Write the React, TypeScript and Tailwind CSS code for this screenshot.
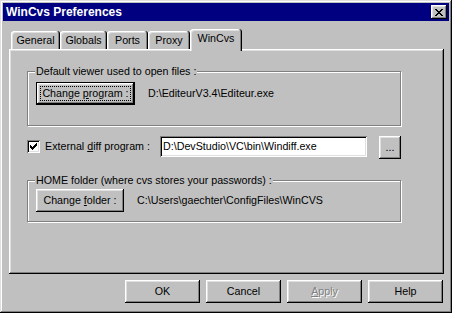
import type { ReactNode } from 'react';

// Win95 bevels, written out in full so Tailwind picks them up.
const raised = 'shadow-[inset_-1px_-1px_#000,inset_1px_1px_#fff,inset_-2px_-2px_#808080,inset_2px_2px_#dfdfdf]';
const sunken = 'shadow-[inset_1px_1px_#808080,inset_-1px_-1px_#fff,inset_2px_2px_#000,inset_-2px_-2px_#dfdfdf]';

function Button({ children, className = '', isDefault = false, disabled = false }: { children: ReactNode; className?: string; isDefault?: boolean; disabled?: boolean }) {
    return (
        <button
            type="button"
            className={`relative flex h-[23px] items-center justify-center bg-[#c0c0c0] ${isDefault ? 'border border-black' : ''} ${raised} ${
                disabled ? 'text-[#808080] [text-shadow:1px_1px_0_#fff]' : 'text-black'
            } ${className}`}
        >
            {/* the focus rectangle on the default button */}
            {isDefault && <span className="pointer-events-none absolute inset-[3px] border border-dotted border-black" />}
            {children}
        </button>
    );
}

function GroupBox({ label, className = '', children }: { label: string; className?: string; children: ReactNode }) {
    return (
        <div className={`relative border border-[#808080] shadow-[inset_1px_1px_#fff,1px_1px_#fff] ${className}`}>
            <span className="absolute -top-[8px] left-[7px] bg-[#c0c0c0] px-[1px] leading-[14px]">{label}</span>
            {children}
        </div>
    );
}

function Tab({ label, width, selected = false }: { label: string; width: number; selected?: boolean }) {
    return (
        <div
            style={{ width }}
            className={`flex justify-center rounded-t-[3px] bg-[#c0c0c0] shadow-[inset_-1px_0_#000,inset_1px_1px_#fff,inset_-2px_0_#808080,inset_2px_2px_#dfdfdf] ${
                selected ? 'relative z-10 -mb-[2px] h-[22px] pt-[3px]' : 'h-[18px] pt-[3px]'
            }`}
        >
            {label}
        </div>
    );
}

export default function App() {
    return (
        <div className="flex h-[313px] w-[452px] flex-col bg-[#c0c0c0] p-[3px] font-['Liberation_Sans',Arial,sans-serif] text-[10.7px] leading-[13px] text-black shadow-[inset_-1px_-1px_#000,inset_1px_1px_#dfdfdf,inset_-2px_-2px_#808080,inset_2px_2px_#fff]">
            <div className="flex h-[18px] items-center justify-between bg-[#000080] pr-[2px] pl-[3px]">
                <span className="text-[12px] font-bold text-white">WinCvs Preferences</span>
                <span className={`flex h-[14px] w-[16px] items-center justify-center bg-[#c0c0c0] ${raised}`}>
                    <svg width="8" height="7" viewBox="0 0 8 7" shapeRendering="crispEdges">
                        <path d="M0 0h2v1h-2zM6 0h2v1h-2zM1 1h2v1h-2zM5 1h2v1h-2zM2 2h4v1h-4zM3 3h2v1h-2zM2 4h4v1h-4zM1 5h2v1h-2zM5 5h2v1h-2zM0 6h2v1h-2zM6 6h2v1h-2z" fill="#000" />
                    </svg>
                </span>
            </div>

            <div className="mt-[8px] ml-[6px] mr-[5px] flex h-[20px] items-end pl-[2px]">
                <Tab label="General" width={49} />
                <Tab label="Globals" width={47} />
                <Tab label="Ports" width={41} />
                <Tab label="Proxy" width={42} />
                <Tab label="WinCvs" width={52} selected />
            </div>

            <div className={`ml-[6px] mr-[5px] flex h-[225px] flex-col bg-[#c0c0c0] ${raised}`}>
                <GroupBox label="Default viewer used to open files :" className="mt-[22px] ml-[18px] h-[55px] w-[374px]">
                    <div className="flex items-center pt-[10px] pl-[8px]">
                        <Button isDefault className="w-[99px]">
                            <span>
                                Change <u>p</u>rogram :
                            </span>
                        </Button>
                        <span className="ml-[13px]">D:\EditeurV3.4\Editeur.exe</span>
                    </div>
                </GroupBox>

                <div className="mt-[10px] ml-[18px] flex h-[21px] items-center">
                    <span className={`flex h-[13px] w-[13px] items-center justify-center bg-white ${sunken}`}>
                        <svg width="7" height="7" viewBox="0 0 7 7" shapeRendering="crispEdges">
                            <path d="M6 0h1v3h-1zM5 1h1v3h-1zM4 2h1v3h-1zM3 3h1v3h-1zM2 4h1v3h-1zM1 3h1v3h-1zM0 2h1v3h-1z" fill="#000" />
                        </svg>
                    </span>
                    <span className="ml-[5px] w-[115px]">
                        External <u>d</u>iff program :
                    </span>
                    <div className={`flex h-[21px] w-[207px] items-center bg-white pl-[3px] ${sunken}`}>D:\DevStudio\VC\bin\Windiff.exe</div>
                    <Button className="ml-[12px] h-[20px] w-[22px] self-start">...</Button>
                </div>

                <GroupBox label="HOME folder (where cvs stores your passwords) :" className="mt-[23px] ml-[18px] h-[42px] w-[374px]">
                    <div className="flex items-center pt-[8px] pl-[8px]">
                        <Button className="w-[88px]">
                            <span>
                                Change <u>f</u>older :
                            </span>
                        </Button>
                        <span className="ml-[13px]">C:\Users\gaechter\ConfigFiles\WinCVS</span>
                    </div>
                </GroupBox>
            </div>

            <div className="mt-[6px] mr-[6px] flex justify-end gap-[6px]">
                <Button className="w-[75px]">OK</Button>
                <Button className="w-[75px]">Cancel</Button>
                <Button className="w-[75px]" disabled>
                    <span>
                        <u>A</u>pply
                    </span>
                </Button>
                <Button className="w-[75px]">Help</Button>
            </div>
        </div>
    );
}
